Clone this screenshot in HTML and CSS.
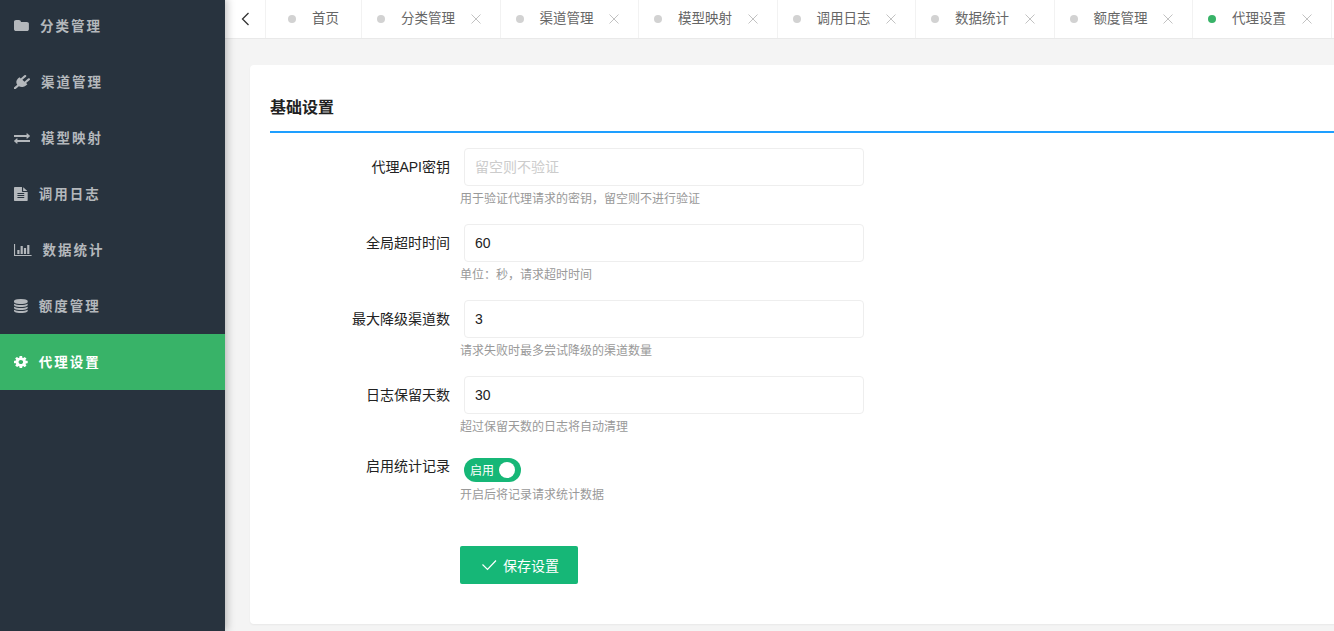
FILE: index.html
```html
<!DOCTYPE html>
<html lang="zh-CN">

<head>
    <meta charset="utf-8">
    <title>代理设置</title>
    <link rel="stylesheet" href="styles.css">
</head>

<body>
    <div class="layout">
        <ul class="side">
            <li>
                <svg class="icon w-folder" viewBox="64 0 1664 1792" preserveAspectRatio="none"><path d="M1728 608v704q0 92-66 158t-158 66h-1216q-92 0-158-66t-66-158v-960q0-92 66-158t158-66h320q92 0 158 66t66 158v32h672q92 0 158 66t66 158z"/></svg>
                <span>分类管理</span>
            </li>
            <li>
                <svg class="icon w-wide" viewBox="0 0 1792 1792" preserveAspectRatio="none"><path d="M1755 453q37 38 37 90.5t-37 90.5l-401 400 150 150-160 160q-163 163-389.5 186.5t-411.5-100.5l-362 362h-181v-181l362-362q-124-185-100.5-411.5t186.5-389.5l160-160 150 150 400-401q38-37 91-37t90 37 37 90.5-37 90.5l-400 401 234 234 401-400q38-37 91-37t90 37z"/></svg>
                <span>渠道管理</span>
            </li>
            <li>
                <svg class="icon w-wide" viewBox="0 0 1792 1792" preserveAspectRatio="none"><path d="M1792 1184v192q0 13-9.5 22.5t-22.5 9.5h-1376v192q0 13-9.5 22.5t-22.5 9.5q-12 0-24-10l-319-320q-9-9-9-22 0-14 9-23l320-320q9-9 23-9 13 0 22.5 9.5t9.5 22.5v192h1376q13 0 22.5 9.5t9.5 22.5zm0-544q0 14-9 23l-320 320q-9 9-23 9-13 0-22.5-9.5t-9.5-22.5v-192h-1376q-13 0-22.5-9.5t-9.5-22.5v-192q0-13 9.5-22.5t22.5-9.5h1376v-192q0-14 9-23t23-9q12 0 24 10l319 319q9 9 9 23z"/></svg>
                <span>模型映射</span>
            </li>
            <li>
                <svg class="icon" viewBox="128 0 1536 1792" preserveAspectRatio="none"><path d="M1596 476q14 14 28 36h-472v-472q22 14 36 28zm-476 164h544v1056q0 40-28 68t-68 28h-1344q-40 0-68-28t-28-68v-1600q0-40 28-68t68-28h800v544q0 40 28 68t68 28zm160 736v-64q0-14-9-23t-23-9h-704q-14 0-23 9t-9 23v64q0 14 9 23t23 9h704q14 0 23-9t9-23zm0-256v-64q0-14-9-23t-23-9h-704q-14 0-23 9t-9 23v64q0 14 9 23t23 9h704q14 0 23-9t9-23zm0-256v-64q0-14-9-23t-23-9h-704q-14 0-23 9t-9 23v64q0 14 9 23t23 9h704q14 0 23-9t9-23z"/></svg>
                <span>调用日志</span>
            </li>
            <li>
                <svg class="icon w-chart" viewBox="0 0 2048 1792" preserveAspectRatio="none"><path d="M640 896v512h-256v-512h256zm384-512v1024h-256v-1024h256zm1024 1152v128h-2048v-1536h128v1408h1920zm-640-896v768h-256v-768h256zm384-384v1152h-256v-1152h256z"/></svg>
                <span>数据统计</span>
            </li>
            <li>
                <svg class="icon" viewBox="128 0 1536 1792" preserveAspectRatio="none"><path d="M896 768q237 0 443-43t325-127v170q0 69-103 128t-280 93.5-385 34.5-385-34.5-280-93.5-103-128v-170q119 84 325 127t443 43zm0 768q237 0 443-43t325-127v170q0 69-103 128t-280 93.5-385 34.5-385-34.5-280-93.5-103-128v-170q119 84 325 127t443 43zm0-384q237 0 443-43t325-127v170q0 69-103 128t-280 93.5-385 34.5-385-34.5-280-93.5-103-128v-170q119 84 325 127t443 43zm0-1152q208 0 385 34.5t280 93.5 103 128v128q0 69-103 128t-280 93.5-385 34.5-385-34.5-280-93.5-103-128v-128q0-69 103-128t280-93.5 385-34.5z"/></svg>
                <span>额度管理</span>
            </li>
            <li class="active">
                <svg class="icon" viewBox="128 0 1536 1792" preserveAspectRatio="none"><path d="M1152 896q0-106-75-181t-181-75-181 75-75 181 75 181 181 75 181-75 75-181zm512-109v222q0 12-8 23t-20 13l-185 28q-19 54-39 91 35 50 107 138 10 12 10 25t-9 23q-27 37-99 108t-94 71q-12 0-26-9l-138-108q-44 23-91 38-16 136-29 186-7 28-36 28h-222q-14 0-24.5-8.5t-11.5-21.5l-28-184q-49-16-90-37l-141 107q-10 9-25 9-14 0-25-11-126-114-165-168-7-10-7-23 0-12 8-23 15-21 51-66.5t54-70.5q-27-50-41-99l-183-27q-13-2-21-12.5t-8-23.5v-222q0-12 8-23t19-13l186-28q14-46 39-92-40-57-107-138-10-12-10-24 0-10 9-23 26-36 98.5-107.5t94.5-71.5q13 0 26 10l138 107q44-23 91-38 16-136 29-186 7-28 36-28h222q14 0 24.5 8.5t11.5 21.5l28 184q49 16 90 37l142-107q9-9 24-9 13 0 25 10 129 119 165 170 7 8 7 22 0 12-8 23-15 21-51 66.5t-54 70.5q26 50 41 98l183 28q13 2 21 12.5t8 23.5z"/></svg>
                <span>代理设置</span>
            </li>
        </ul>

        <div class="main">
            <div class="tabs">
                <div class="prev"><svg width="9" height="14" viewBox="0 0 9 14"><path d="M7.5 1L1.5 7l6 6"/></svg></div>
                <div class="tab home"><i class="dot"></i><span>首页</span></div>
                <div class="tab"><i class="dot"></i><span>分类管理</span><svg class="close" viewBox="0 0 10 10"><path d="M.5.5l9 9M9.5.5l-9 9"/></svg></div>
                <div class="tab"><i class="dot"></i><span>渠道管理</span><svg class="close" viewBox="0 0 10 10"><path d="M.5.5l9 9M9.5.5l-9 9"/></svg></div>
                <div class="tab"><i class="dot"></i><span>模型映射</span><svg class="close" viewBox="0 0 10 10"><path d="M.5.5l9 9M9.5.5l-9 9"/></svg></div>
                <div class="tab"><i class="dot"></i><span>调用日志</span><svg class="close" viewBox="0 0 10 10"><path d="M.5.5l9 9M9.5.5l-9 9"/></svg></div>
                <div class="tab"><i class="dot"></i><span>数据统计</span><svg class="close" viewBox="0 0 10 10"><path d="M.5.5l9 9M9.5.5l-9 9"/></svg></div>
                <div class="tab"><i class="dot"></i><span>额度管理</span><svg class="close" viewBox="0 0 10 10"><path d="M.5.5l9 9M9.5.5l-9 9"/></svg></div>
                <div class="tab"><i class="dot on"></i><span>代理设置</span><svg class="close" viewBox="0 0 10 10"><path d="M.5.5l9 9M9.5.5l-9 9"/></svg></div>
            </div>

            <form class="card">
                <h3 class="title">基础设置</h3>
                <div class="row">
                    <label>代理API密钥</label>
                    <div class="field">
                        <input type="text" placeholder="留空则不验证">
                        <p class="tip">用于验证代理请求的密钥，留空则不进行验证</p>
                    </div>
                </div>
                <div class="row">
                    <label>全局超时时间</label>
                    <div class="field">
                        <input type="text" value="60">
                        <p class="tip">单位：秒，请求超时时间</p>
                    </div>
                </div>
                <div class="row">
                    <label>最大降级渠道数</label>
                    <div class="field">
                        <input type="text" value="3">
                        <p class="tip">请求失败时最多尝试降级的渠道数量</p>
                    </div>
                </div>
                <div class="row">
                    <label>日志保留天数</label>
                    <div class="field">
                        <input type="text" value="30">
                        <p class="tip">超过保留天数的日志将自动清理</p>
                    </div>
                </div>
                <div class="row row-switch">
                    <label>启用统计记录</label>
                    <div class="field">
                        <div class="switch"><span>启用</span><i></i></div>
                        <p class="tip">开启后将记录请求统计数据</p>
                    </div>
                </div>
                <button type="button" class="save">
                    <svg width="16" height="12" viewBox="0 0 16 12"><path d="M1.5 5.5l5 5L15 1.5"/></svg>
                    <span>保存设置</span>
                </button>
            </form>
        </div>
    </div>
</body>

</html>
```
FILE: styles.css
```css
* {
    box-sizing: border-box;
}

body,
ul,
p,
h3 {
    margin: 0;
    padding: 0;
}

body {
    overflow: hidden;
    background: #f4f4f4;
    font: 14px "Liberation Sans", "Noto Sans CJK SC", sans-serif;
    color: #222;
}

.layout {
    display: flex;
    height: 631px;
}

/* 左侧菜单 */
.side {
    position: relative;
    z-index: 1;
    flex: none;
    width: 225px;
    height: 633px;
    margin-top: -2px;
    list-style: none;
    background: #28333e;
    box-shadow: 2px 0 8px rgba(0, 0, 0, .25);
}

.side li {
    display: flex;
    align-items: center;
    gap: 11px;
    height: 56px;
    padding-left: 14px;
    font-size: 13.5px;
    font-weight: bold;
    letter-spacing: 2px;
    color: #b4b8bc;
}

.side li span {
    padding-bottom: 2px;
}

.side .active {
    background: #38b368;
    color: #fff;
}

.icon {
    width: 13.7px;
    height: 14px;
    fill: currentColor;
}

.w-folder {
    width: 14.9px;
}

.w-wide {
    width: 16px;
}

.w-chart {
    width: 17.6px;
}

.main {
    flex: 1;
    min-width: 0;
}

/* 顶部标签 */
.tabs {
    display: flex;
    height: 39px;
    background: #fff;
    border-bottom: 1px solid #e9e9e9;
    overflow: hidden;
}

.prev {
    display: flex;
    flex: none;
    align-items: center;
    width: 41px;
    padding-left: 16px;
    border-right: 1px solid #f2f2f2;
}

.prev path {
    fill: none;
    stroke: #333;
    stroke-width: 1.3;
}

.tab {
    display: flex;
    flex: none;
    align-items: center;
    width: 138.5px;
    padding-left: 15px;
    border-right: 1px solid #f2f2f2;
    font-size: 13.5px;
    color: #666;
}

.tab span {
    padding-bottom: 5px;
}

.home {
    width: 96px;
    padding-left: 22px;
}

.dot {
    width: 8px;
    height: 8px;
    margin-right: 16px;
    border-radius: 50%;
    background: #d2d2d2;
}

.on {
    background: #38b368;
}

.close {
    width: 10px;
    height: 10px;
    margin-left: 15.5px;
    fill: none;
    stroke: #c2c2c2;
}

/* 设置表单 */
.card {
    width: 1104px;
    height: 559px;
    margin: 26px 0 0 25px;
    padding: 20px;
    background: #fff;
    border-radius: 4px;
    box-shadow: 0 1px 2px rgba(0, 0, 0, .05);
}

.title {
    height: 48px;
    margin-bottom: 15px;
    border-bottom: 2px solid #1e9fff;
    font-size: 16px;
    font-weight: bold;
    line-height: 45px;
}

.row {
    display: flex;
    height: 76px;
}

.row label {
    width: 180px;
    margin-right: 10px;
    line-height: 38px;
    text-align: right;
}

.field input {
    display: block;
    width: 400px;
    height: 38px;
    margin-left: 4px;
    padding: 0 10px;
    border: 1px solid #eee;
    border-radius: 4px;
    outline: none;
    font: inherit;
    color: #222;
}

.field input::placeholder {
    color: #ccc;
}

.tip {
    margin-top: 3px;
    font-size: 12px;
    line-height: 20px;
    color: #999;
}

.row-switch {
    height: 94px;
}

.row-switch label {
    line-height: 28px;
}

.switch {
    display: flex;
    align-items: center;
    justify-content: space-between;
    width: 57px;
    height: 24px;
    margin: 6px 0 0 4px;
    padding: 0 6px;
    border-radius: 12px;
    background: #16b777;
    font-size: 12px;
    color: #fff;
}

.switch span {
    padding-bottom: 2px;
}

.switch i {
    width: 16px;
    height: 16px;
    border-radius: 50%;
    background: #fff;
}

.save {
    display: flex;
    align-items: center;
    gap: 6px;
    width: 118px;
    height: 38px;
    margin-left: 190px;
    padding: 0 0 0 21px;
    border: 0;
    border-radius: 2px;
    background: #16b777;
    font: inherit;
    color: #fff;
}

.save path {
    fill: none;
    stroke: #fff;
    stroke-width: 1.2;
}
```
